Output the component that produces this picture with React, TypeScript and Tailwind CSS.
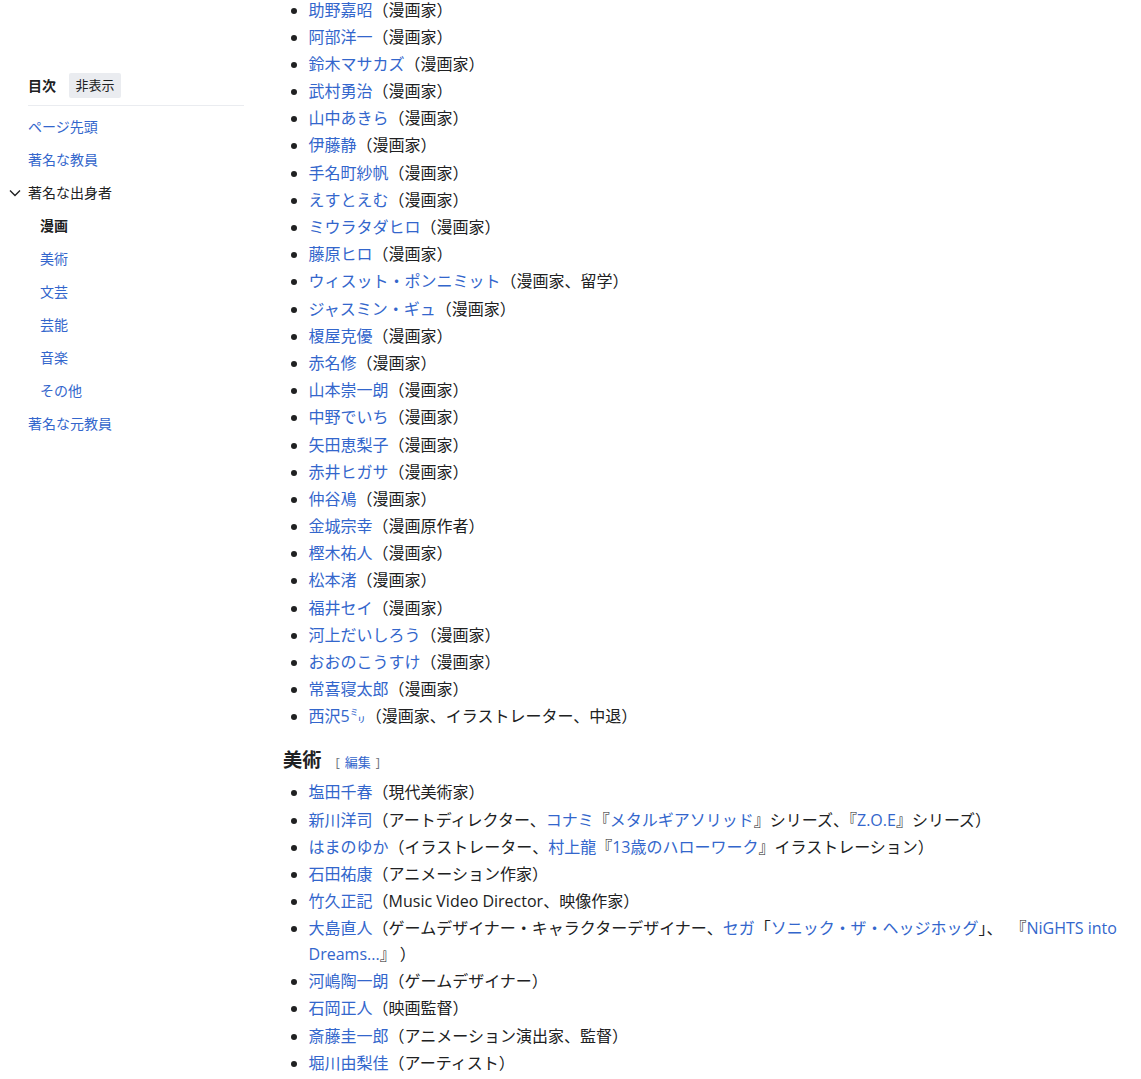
import React from 'react';

type Seg = string | { l: string } | { gap: true };

const manga: Seg[][] = [
  [{ l: '助野嘉昭' }, '（漫画家）'],
  [{ l: '阿部洋一' }, '（漫画家）'],
  [{ l: '鈴木マサカズ' }, '（漫画家）'],
  [{ l: '武村勇治' }, '（漫画家）'],
  [{ l: '山中あきら' }, '（漫画家）'],
  [{ l: '伊藤静' }, '（漫画家）'],
  [{ l: '手名町紗帆' }, '（漫画家）'],
  [{ l: 'えすとえむ' }, '（漫画家）'],
  [{ l: 'ミウラタダヒロ' }, '（漫画家）'],
  [{ l: '藤原ヒロ' }, '（漫画家）'],
  [{ l: 'ウィスット・ポンニミット' }, '（漫画家、留学）'],
  [{ l: 'ジャスミン・ギュ' }, '（漫画家）'],
  [{ l: '榎屋克優' }, '（漫画家）'],
  [{ l: '赤名修' }, '（漫画家）'],
  [{ l: '山本崇一朗' }, '（漫画家）'],
  [{ l: '中野でいち' }, '（漫画家）'],
  [{ l: '矢田恵梨子' }, '（漫画家）'],
  [{ l: '赤井ヒガサ' }, '（漫画家）'],
  [{ l: '仲谷鳰' }, '（漫画家）'],
  [{ l: '金城宗幸' }, '（漫画原作者）'],
  [{ l: '樫木祐人' }, '（漫画家）'],
  [{ l: '松本渚' }, '（漫画家）'],
  [{ l: '福井セイ' }, '（漫画家）'],
  [{ l: '河上だいしろう' }, '（漫画家）'],
  [{ l: 'おおのこうすけ' }, '（漫画家）'],
  [{ l: '常喜寝太郎' }, '（漫画家）'],
  [{ l: '西沢5㍉' }, '（漫画家、イラストレーター、中退）'],
];

const art: Seg[][] = [
  [{ l: '塩田千春' }, '（現代美術家）'],
  [
    { l: '新川洋司' },
    '（アートディレクター、',
    { l: 'コナミ' },
    '『',
    { l: 'メタルギアソリッド' },
    '』シリーズ、『',
    { l: 'Z.O.E' },
    '』シリーズ）',
  ],
  [
    { l: 'はまのゆか' },
    '（イラストレーター、',
    { l: '村上龍' },
    '『',
    { l: '13歳のハローワーク' },
    '』イラストレーション）',
  ],
  [{ l: '石田祐康' }, '（アニメーション作家）'],
  [{ l: '竹久正記' }, '（Music Video Director、映像作家）'],
  [
    { l: '大島直人' },
    '（ゲームデザイナー・キャラクターデザイナー、',
    { l: 'セガ' },
    '「',
    { l: 'ソニック・ザ・ヘッジホッグ' },
    '」、',
    { gap: true },
    '『',
    { l: 'NiGHTS into Dreams...' },
    '』 ）',
  ],
  [{ l: '河嶋陶一朗' }, '（ゲームデザイナー）'],
  [{ l: '石岡正人' }, '（映画監督）'],
  [{ l: '斎藤圭一郎' }, '（アニメーション演出家、監督）'],
  [{ l: '堀川由梨佳' }, '（アーティスト）'],
];

function Item({ segs }: { segs: Seg[] }) {
  return (
    <li className="mb-[1.6px] leading-[25.6px]">
      {segs.map((s, i) => {
        if (typeof s === 'string') return <span key={i}>{s}</span>;
        if ('gap' in s) return <span key={i} className="inline-block w-[8px]" />;
        return (
          <a key={i} href="#" className="text-[#3366cc]">
            {s.l}
          </a>
        );
      })}
    </li>
  );
}

function TocLink({ children, sub, active }: { children: React.ReactNode; sub?: boolean; active?: boolean }) {
  return (
    <li className={`py-[5.5px] leading-[22px] ${sub ? 'pl-[12px]' : ''}`}>
      <a href="#" className={active ? 'font-bold text-[#202122]' : 'text-[#3366cc]'}>
        {children}
      </a>
    </li>
  );
}

export default function App() {
  return (
    <div className="flex min-h-screen overflow-hidden bg-white font-['Open_Sans','Noto_Sans_CJK_JP',sans-serif] text-[#202122]">
      <nav className="w-[244px] shrink-0 pl-[28px] pt-[73px] text-[14px]">
        <div className="flex items-center border-b border-[#eaecf0] pb-[6.5px]">
          <span className="font-bold">目次</span>
          <button className="ml-[13px] h-[25px] rounded-[2px] bg-[#eaecf0] px-[6.5px] text-[13px] leading-[25px] text-[#202122]">
            非表示
          </button>
        </div>
        <ul className="pt-[4.5px]">
          <TocLink>ページ先頭</TocLink>
          <TocLink>著名な教員</TocLink>
          <li className="flex items-center py-[5.5px] leading-[22px]">
            <span className="-ml-[19px] flex w-[19px] items-center">
              <svg width="12" height="8" viewBox="0 0 12 8">
                <path d="M1 1.5 L6 6.5 L11 1.5" fill="none" stroke="#202122" strokeWidth="1.4" />
              </svg>
            </span>
            <span>著名な出身者</span>
          </li>
          <TocLink sub active>漫画</TocLink>
          <TocLink sub>美術</TocLink>
          <TocLink sub>文芸</TocLink>
          <TocLink sub>芸能</TocLink>
          <TocLink sub>音楽</TocLink>
          <TocLink sub>その他</TocLink>
          <TocLink>著名な元教員</TocLink>
        </ul>
      </nav>
      <main className="min-w-0 flex-1 pl-[39px] pr-[12px] text-[16px]">
        <ul className="-mt-[2.5px] ml-[25.6px] list-disc">
          {manga.map((s, i) => (
            <Item key={i} segs={s} />
          ))}
        </ul>
        <h3 className="mt-[5.76px] pt-[9px] text-[19.2px] font-bold leading-[30.72px]">
          美術
          <span className="ml-[14px] text-[13px] font-normal">
            <span className="mr-[5px] text-[#72777d]">[</span>
            <a href="#" className="text-[#3366cc]">編集</a>
            <span className="ml-[5px] text-[#72777d]">]</span>
          </span>
        </h3>
        <ul className="mt-[3px] ml-[25.6px] list-disc">
          {art.map((s, i) => (
            <Item key={i} segs={s} />
          ))}
        </ul>
      </main>
    </div>
  );
}
